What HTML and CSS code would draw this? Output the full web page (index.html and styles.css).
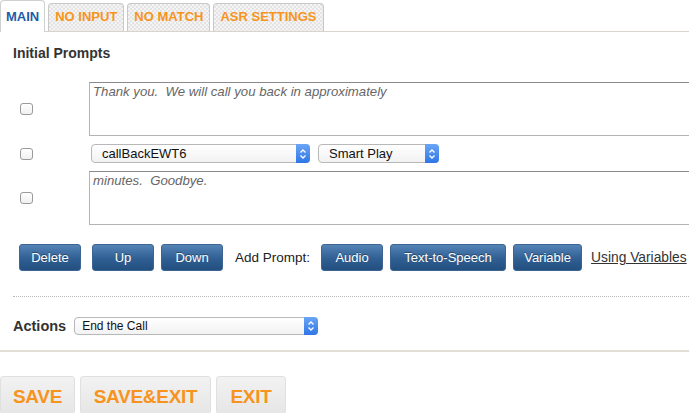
FILE: index.html
```html
<!DOCTYPE html>
<html>
<head>
<meta charset="utf-8">
<link rel="stylesheet" href="styles.css">
</head>
<body>
<div class="page">
  <div class="tabs">
    <div class="tab active">MAIN</div>
    <div class="tab">NO INPUT</div>
    <div class="tab">NO MATCH</div>
    <div class="tab">ASR SETTINGS</div>
  </div>
  <div class="content">
    <h2 class="heading">Initial Prompts</h2>
    <div class="prompts">
      <div class="row tall">
        <span class="check"></span>
        <div class="area">Thank you.&nbsp; We will call you back in approximately</div>
      </div>
      <div class="row short">
        <span class="check"></span>
        <div class="selects">
          <div class="sel w-var"><span>callBackEWT6</span><i class="step"><svg viewBox="0 0 8 12" width="8" height="12"><path d="M1.5 4.5 L4 2 L6.5 4.5 M1.5 7.5 L4 10 L6.5 7.5" fill="none" stroke="#fff" stroke-width="1.3"/></svg></i></div>
          <div class="sel w-play"><span>Smart Play</span><i class="step"><svg viewBox="0 0 8 12" width="8" height="12"><path d="M1.5 4.5 L4 2 L6.5 4.5 M1.5 7.5 L4 10 L6.5 7.5" fill="none" stroke="#fff" stroke-width="1.3"/></svg></i></div>
        </div>
      </div>
      <div class="row tall">
        <span class="check"></span>
        <div class="area">minutes.&nbsp; Goodbye.</div>
      </div>
    </div>
    <div class="btnbar">
      <span class="btn w62">Delete</span>
      <span class="btn w62 ml11">Up</span>
      <span class="btn w62">Down</span>
      <span class="label">Add Prompt:</span>
      <span class="btn w62">Audio</span>
      <span class="btn w116">Text-to-Speech</span>
      <span class="btn w69">Variable</span>
      <a class="link">Using Variables</a>
    </div>
    <div class="dotted"></div>
    <div class="actions">
      <span class="alabel">Actions</span>
      <div class="sel w-act"><span>End the Call</span><i class="step"><svg viewBox="0 0 8 12" width="8" height="12"><path d="M1.5 4.5 L4 2 L6.5 4.5 M1.5 7.5 L4 10 L6.5 7.5" fill="none" stroke="#fff" stroke-width="1.3"/></svg></i></div>
    </div>
  </div>
  <div class="solid"></div>
  <div class="footer">
    <span class="fbtn w75">SAVE</span>
    <span class="fbtn w131">SAVE&amp;EXIT</span>
    <span class="fbtn w70">EXIT</span>
  </div>
</div>
</body>
</html>
```
FILE: styles.css
```css
html, body { margin: 0; padding: 0; background: #fff; overflow: hidden; }
body { font-family: "Liberation Sans", Arial, sans-serif; color: #222; }
.page { width: 689px; height: 413px; overflow: hidden; }

.tabs { display: flex; gap: 3px; height: 31px; border-bottom: 1px solid #d8d4cc; align-items: flex-end; }
.tab {
  height: 28px; box-sizing: border-box; padding: 0 6px;
  font-size: 13px; font-weight: bold; color: #f7941d; line-height: 26px;
  border: 1px solid #c8c8c8; border-bottom: none; border-radius: 4px 4px 0 0;
  background-color: #ececec;
  background-image: repeating-conic-gradient(#e4e4e4 0 25%, #f4f4f4 0 50%);
  background-size: 4px 4px;
}
.tab.active {
  height: 32px; margin-bottom: -1px; background: #fff; color: #1d5ca8;
  line-height: 32px; padding: 0 5px; border-color: #d0d0d0;
}

.content { padding-left: 13px; }
.heading { margin: 13px 0 0; font-size: 14px; font-weight: bold; line-height: 17px; color: #333; }

.prompts { margin-top: 20px; display: flex; flex-direction: column; gap: 8px; }
.row { display: flex; align-items: center; }
.row.tall { height: 54px; }
.row.short { height: 19px; }
.check {
  flex: none; width: 13px; height: 12px; margin-left: 7px; margin-right: 56px; box-sizing: border-box;
  border: 1px solid #9a9a9a; border-radius: 3px; background: linear-gradient(#fff, #f0f0f0);
}
.area {
  width: 700px; flex: none; height: 54px; box-sizing: border-box;
  border: 1px solid #b4b4b4; border-top-color: #8a8a8a; padding: 1px 3px;
  font-size: 13.2px; font-style: italic; color: #666; line-height: 15px;
}
.selects { display: flex; gap: 8px; padding-left: 2px; }
.sel {
  flex: none; height: 19px; box-sizing: border-box; border: 1px solid #b8b8b8; border-radius: 4px;
  background: linear-gradient(#fff, #f2f2f2); display: flex; align-items: center; justify-content: space-between;
  font-size: 13px; color: #111; padding-left: 10px; position: relative;
}
.w-var { width: 219px; }
.w-play { width: 121px; }
.w-act { width: 244px; font-size: 12px; padding-left: 7px; height: 18px; }
.step {
  width: 14px; height: calc(100% + 2px); margin: -1px -1px -1px 0; border-radius: 0 4px 4px 0;
  background: linear-gradient(#6aa6f5, #2f76e6); display: flex; align-items: center; justify-content: center;
}

.btnbar { display: flex; align-items: center; margin-top: 19px; height: 27px; padding-left: 6px; gap: 7px; }
.btn {
  flex: none; height: 27px; box-sizing: border-box; display: inline-flex; align-items: center; justify-content: center;
  background: linear-gradient(#5583b6, #2f5f93 55%, #234f80);
  border: 1px solid #3d6593; border-radius: 3px;
  color: #fff; font-size: 13px; text-shadow: 0 -1px 0 rgba(0,0,0,0.35);
}
.ml11 { margin-left: 4px; }
.w62 { width: 62px; }
.w116 { width: 116px; }
.w69 { width: 69px; }
.label { font-size: 13.5px; color: #222; margin: 0 4px 0 5px; }
.link { font-size: 13.8px; color: #333; text-decoration: underline; margin-left: 2px; white-space: nowrap; }

.dotted { margin-top: 25px; border-top: 1px dotted #b8b8b8; height: 0; }
.actions { display: flex; align-items: center; margin-top: 20px; gap: 8px; }
.alabel { font-size: 14.5px; font-weight: bold; color: #333; }

.solid { margin-top: 15px; border-top: 2px solid #e2ddd5; }
.footer { display: flex; gap: 5px; margin-top: 24px; }
.fbtn {
  height: 38px; box-sizing: border-box; display: inline-flex; align-items: center; justify-content: center;
  background: linear-gradient(#f2f2f2, #e6e6e6); border: 1px solid #e0e0e0; border-radius: 3px;
  color: #f7941d; font-weight: bold; font-size: 19px; letter-spacing: -0.3px; padding-top: 4px;
}
.w75 { width: 75px; }
.w131 { width: 131px; }
.w70 { width: 70px; }
```
